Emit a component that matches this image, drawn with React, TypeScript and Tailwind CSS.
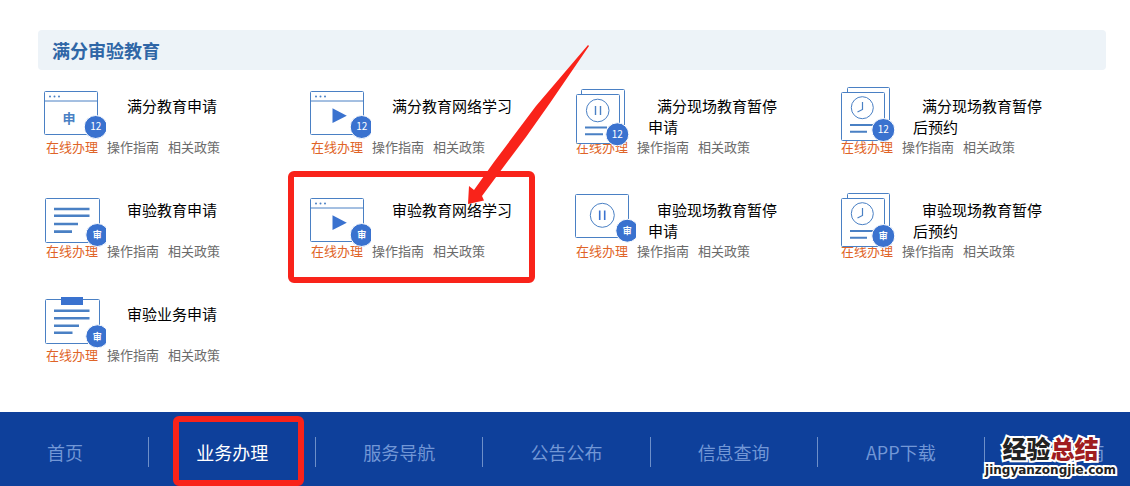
import React from "react";

type IconKind =
  | "apply"
  | "video"
  | "pausePaper"
  | "clockPaper"
  | "form"
  | "pauseCard"
  | "clipboard";

type Service = {
  title: string;
  icon: IconKind;
  badge: string;
  highlighted?: boolean;
};

const services: Service[] = [
  { title: "满分教育申请", icon: "apply", badge: "12" },
  { title: "满分教育网络学习", icon: "video", badge: "12" },
  { title: "满分现场教育暂停申请", icon: "pausePaper", badge: "12" },
  { title: "满分现场教育暂停后预约", icon: "clockPaper", badge: "12" },
  { title: "审验教育申请", icon: "form", badge: "审" },
  {
    title: "审验教育网络学习",
    icon: "video",
    badge: "审",
    highlighted: true,
  },
  { title: "审验现场教育暂停申请", icon: "pauseCard", badge: "审" },
  { title: "审验现场教育暂停后预约", icon: "clockPaper", badge: "审" },
  { title: "审验业务申请", icon: "clipboard", badge: "审" },
];

const navItems = [
  "首页",
  "业务办理",
  "服务导航",
  "公告公布",
  "信息查询",
  "APP下载",
  "操作指南",
];

const LINE = "#4a80c4";
const FILL = "#3a72cf";

const Badge = ({ x, y, text }: { x: number; y: number; text: string }) => (
  <g>
    <circle cx={x} cy={y} r="11.5" fill={FILL} stroke="#fff" />
    <text
      x={x}
      y={y + 3.4}
      textAnchor="middle"
      fontSize={text === "12" ? 10 : 9}
      fontWeight={text === "12" ? 400 : 700}
      fill="#fff"
    >
      {text}
    </text>
  </g>
);

const BrowserFrame = ({ x }: { x: number }) => (
  <g>
    <rect x={x} y="5.5" width="53" height="43" rx="1" fill="#fff" stroke={LINE} />
    <path d={`M${x} 15h53`} stroke={LINE} />
    <g fill={LINE}>
      <circle cx={x + 5.5} cy="10.5" r="1" />
      <circle cx={x + 10} cy="10.5" r="1" />
      <circle cx={x + 14.5} cy="10.5" r="1" />
    </g>
  </g>
);

const ServiceIcon = ({ kind, badge }: { kind: IconKind; badge: string }) => {
  // the second set of icons sits slightly lower
  const drop = badge === "12" ? 0 : kind === "video" ? 3 : 2;

  return (
    <svg
      className="pointer-events-none relative z-10 h-[62px] w-[62px] shrink-0"
      viewBox="0 0 62 62"
      fill="none"
      aria-hidden="true"
    >
      {kind === "apply" && (
        <>
          <BrowserFrame x={0.5} />
          <text
            x="25"
            y="36.5"
            textAnchor="middle"
            fontSize="13"
            fontWeight="700"
            fill={LINE}
          >
            申
          </text>
          <Badge x={51.7} y={41} text={badge} />
        </>
      )}
      {kind === "video" && (
        <g transform={`translate(0 ${drop})`}>
          <BrowserFrame x={1.5} />
          <path d="M23.5 22.3v14.8l14.3-7.4z" fill={FILL} />
          <Badge x={52.7} y={drop ? 42 : 41} text={badge} />
        </g>
      )}
      {kind === "pausePaper" && (
        <>
          <rect x="7.5" y="3.5" width="43" height="44" rx="1" stroke={LINE} />
          <rect x="2.5" y="8.5" width="43" height="49" rx="1" fill="#fff" stroke={LINE} />
          <circle cx="23.7" cy="24.5" r="11.3" stroke={LINE} />
          <path d="M21.5 20v9M26.5 20v9" stroke={LINE} strokeWidth="1.4" />
          <path d="M11 41.5h22M11 48.2h18" stroke={LINE} strokeWidth="2" />
          <Badge x={43.3} y={48.3} text={badge} />
        </>
      )}
      {kind === "clockPaper" && (
        <g transform={`translate(0 ${drop})`}>
          <rect x="8.5" y="1.5" width="42" height="44" rx="1" stroke={LINE} />
          <rect x="2.5" y="6.5" width="43" height="48" rx="1" fill="#fff" stroke={LINE} />
          <circle cx="23.3" cy="21.7" r="11" stroke={LINE} />
          <path d="M23.5 16v7.5l-5 2.5" stroke={LINE} strokeWidth="1.2" />
          <path d="M11 39h23M11 45.7h17" stroke={LINE} strokeWidth="2" />
          <Badge x={44.3} y={44} text={badge} />
        </g>
      )}
      {kind === "form" && (
        <>
          <rect x="1.5" y="8.5" width="54" height="44" rx="1" fill="#fff" stroke={LINE} />
          <path
            d="M10 19h35.5M10 25.8h35.5M10 34h24M10 41.6h18"
            stroke={LINE}
            strokeWidth="2.6"
          />
          <Badge x={53.3} y={45} text={badge} />
        </>
      )}
      {kind === "pauseCard" && (
        <>
          <rect x="1.5" y="4.5" width="53" height="43" rx="1" fill="#fff" stroke={LINE} />
          <circle cx="28.3" cy="25.3" r="12" stroke={LINE} />
          <path d="M25.7 20.5v9.5M30.7 20.5v9.5" stroke={FILL} strokeWidth="1.6" />
          <Badge x={53.3} y={40.7} text={badge} />
        </>
      )}
      {kind === "clipboard" && (
        <>
          <rect x="1.5" y="5.5" width="54" height="44" rx="1" fill="#fff" stroke={LINE} />
          <rect x="17" y="3" width="22" height="8" fill={FILL} />
          <path
            d="M10 16.8h35.5M10 24.3h35.5M10 31.8h25M10 38.8h18.5"
            stroke={LINE}
            strokeWidth="2.6"
          />
          <Badge x={53.3} y={42.3} text={badge} />
        </>
      )}
    </svg>
  );
};

// red frame with the arrow pointing at the card title
const Highlight = () => (
  <div className="pointer-events-none absolute -top-[19px] -left-[21px] z-20 h-28 w-[247px] rounded-md border-6 border-[#f9231a]">
    <svg
      className="absolute -top-[132px] right-[-60px] h-[170px] w-[130px]"
      viewBox="0 0 130 170"
      aria-hidden="true"
    >
      <path
        d="M129 0L130 1L91 58L67 92L43 124L23 151L25 155.500L9 159L10 141L15 145L35 117L77 61z"
        fill="#f9231a"
      />
    </svg>
  </div>
);

const ServiceCard = ({ service }: { service: Service }) => (
  <div className="relative h-26">
    <div className="flex h-[51px]">
      <ServiceIcon kind={service.icon} badge={service.badge} />
      <h3 className="ml-3 w-[140px] pt-[9px] indent-[9px] text-[15px] leading-[21px] text-black">
        {service.title}
      </h3>
    </div>
    <div className="flex gap-[9px] pl-0.5 text-[13px] leading-5 text-[#6b6b6b]">
      <a href="#" className="text-[#df6427]">
        在线办理
      </a>
      <a href="#">操作指南</a>
      <a href="#">相关政策</a>
    </div>
    {service.highlighted && <Highlight />}
  </div>
);

const Watermark = () => (
  <div className="pointer-events-none absolute right-3.5 bottom-2 flex flex-col items-center [-webkit-text-stroke:4px_white] [paint-order:stroke_fill]">
    <p className="text-2xl leading-7 font-black text-[#222]">
      经验<span className="text-[#a01c20]">总结</span>
    </p>
    <p className="font-['DejaVu_Sans',sans-serif] text-xs font-bold text-[#222]">
      jingyanzongjie.com
    </p>
  </div>
);

export default function App() {
  return (
    <div className="overflow-hidden bg-white font-['Noto_Sans_CJK_SC',sans-serif]">
      <main className="pt-[30px] pr-6 pb-3.5 pl-[38px]">
        <h2 className="rounded bg-[#edf3f8] px-3.5 text-lg leading-10 font-bold text-[#2f66a6]">
          满分审验教育
        </h2>
        <div className="mt-4 grid grid-cols-4 pr-0.5 pl-1.5">
          {services.map((service) => (
            <ServiceCard key={service.title} service={service} />
          ))}
        </div>
      </main>

      <footer className="relative h-[74px] overflow-hidden bg-[#0e409b]">
        <nav className="-mr-[22px] -ml-[18px] grid h-full grid-cols-7">
          {navItems.map((item, index) => {
            const active = index === 1;
            return (
              <div key={item} className="relative flex items-center pt-1.5">
                <a
                  href="#"
                  className={`flex h-[30px] w-full items-center justify-center text-lg ${
                    active ? "text-white" : "text-[#7297d6]"
                  } ${index < navItems.length - 1 ? "border-r border-[#6d8fc9]" : ""}`}
                >
                  {item}
                </a>
                {active && (
                  <span className="pointer-events-none absolute top-1 right-3 bottom-0 left-6 rounded-md border-6 border-[#f9231a]" />
                )}
              </div>
            );
          })}
        </nav>
        <Watermark />
      </footer>
    </div>
  );
}
